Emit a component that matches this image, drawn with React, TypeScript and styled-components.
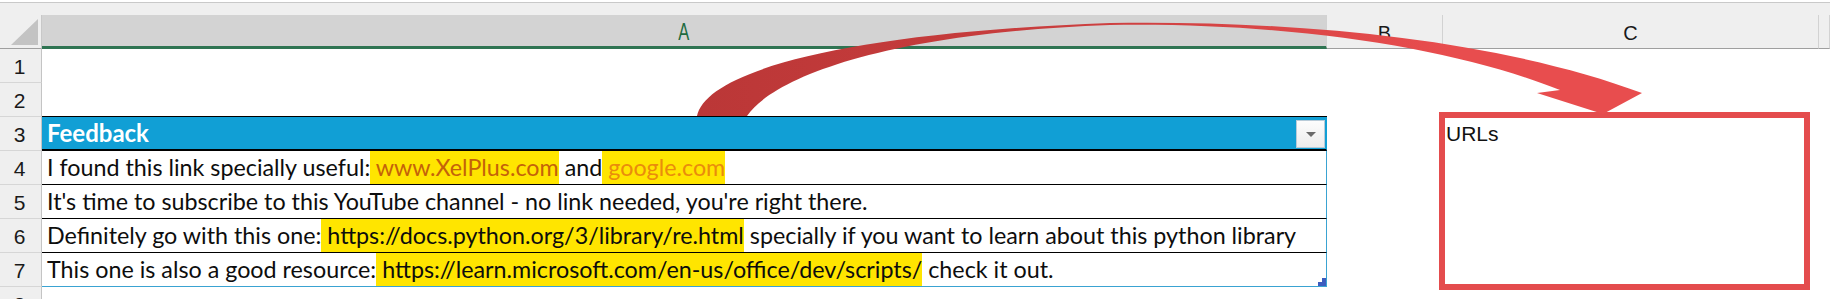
import React from "react";
import styled, { createGlobalStyle } from "styled-components";

const GlobalStyle = createGlobalStyle`
  html, body {
    margin: 0;
    padding: 0;
    background: #ffffff;
  }
  body {
    font-family: "Liberation Sans", Arial, sans-serif;
  }
`;

const COLS = "42px 1285px 116px 376px 1fr";

const Sheet = styled.div`
  position: relative;
  width: 1830px;
  height: 299px;
  overflow: hidden;
  background: #fff;
`;

const TopStrip = styled.div`
  height: 12px;
  margin-top: 2px;
  border-top: 1px solid #c9c9c9;
  background: #efefef;
`;

const HeaderRow = styled.div`
  display: grid;
  grid-template-columns: ${COLS};
  grid-template-rows: 34px;
  height: 34px;
  background: #efefef;
`;

const Corner = styled.div`
  box-sizing: border-box;
  border-right: 1px solid #c8c8c8;
  border-bottom: 1px solid #9f9f9f;
  display: flex;
  align-items: flex-end;
  justify-content: flex-end;
  padding: 0 3px 3px 0;
`;

const ColHead = styled.div<{ $active?: boolean }>`
  box-sizing: border-box;
  display: flex;
  align-items: center;
  justify-content: center;
  padding-top: 3px;
  border-right: 1px solid #d2d2d2;
  border-bottom: ${(p) => (p.$active ? "3px solid #2f7452" : "1px solid #9f9f9f")};
  background: ${(p) => (p.$active ? "#d3d3d3" : "#efefef")};
  color: ${(p) => (p.$active ? "#1e6b40" : "#1a1a1a")};
  font-size: 20px;
`;

const NarrowLetter = styled.span`
  display: inline-block;
  font-size: 23px;
  transform: scaleX(0.72);
`;

const Row = styled.div`
  display: grid;
  grid-template-columns: ${COLS};
  grid-template-rows: 34px;
  height: 34px;
`;

const RowHead = styled.div`
  box-sizing: border-box;
  background: #efefef;
  border-right: 1px solid #c4c4c4;
  border-bottom: 1px solid #d6d6d6;
  text-align: center;
  padding: 2px 2px 0 0;
  line-height: 31px;
  font-size: 21px;
  color: #1a1a1a;
  overflow: hidden;
`;

type Kind = "plain" | "above" | "head" | "body" | "last";

const borderBottom: Record<Kind, string> = {
  plain: "none",
  above: "1px solid #000",
  head: "2px solid #000",
  body: "1px solid #000",
  last: "1px solid #3aa3d2",
};

const TableCell = styled.div<{ $kind: Kind }>`
  position: relative;
  box-sizing: border-box;
  display: flex;
  align-items: ${(p) => (p.$kind === "head" ? "flex-end" : "stretch")};
  padding-left: 5px;
  border-bottom: ${(p) => borderBottom[p.$kind]};
  border-right: ${(p) =>
    p.$kind === "head"
      ? "1px solid #119fd5"
      : p.$kind === "body" || p.$kind === "last"
      ? "1px solid #3aa3d2"
      : "none"};
  background: ${(p) => (p.$kind === "head" ? "#119fd5" : "#fff")};
  font-family: Lato, "Liberation Sans", sans-serif;
  font-size: 23.3px;
  line-height: 33px;
  color: #0d0d0d;
  white-space: nowrap;
  overflow: hidden;
`;

const HeadTitle = styled.span`
  align-self: stretch;
  line-height: 32px;
  font-size: 24px;
  font-weight: 700;
  color: #ffffff;
`;

const FilterButton = styled.div`
  margin-left: auto;
  margin-right: 1px;
  margin-bottom: 1px;
  width: 29px;
  height: 28px;
  box-sizing: border-box;
  border: 1px solid #b9cbd8;
  background: linear-gradient(#fdfdfd, #ececec);
  display: flex;
  align-items: center;
  justify-content: center;
  &::after {
    content: "";
    width: 0;
    height: 0;
    border-left: 5px solid transparent;
    border-right: 5px solid transparent;
    border-top: 5px solid #6a6a6a;
  }
`;

const Text = styled.span`
  display: inline-block;
`;

const Mark = styled.span<{ $color?: string }>`
  display: inline-block;
  background: #ffe500;
  color: ${(p) => p.$color || "#0d0d0d"};
`;

const ResizeHandle = styled.svg`
  position: absolute;
  right: 0;
  bottom: 0;
`;

const Cell = styled.div`
  box-sizing: border-box;
  padding-left: 3px;
  line-height: 33px;
  font-size: 21px;
  color: #111;
  white-space: nowrap;
`;

const RedBox = styled.div`
  position: absolute;
  left: 1439px;
  top: 112px;
  width: 371px;
  height: 178px;
  box-sizing: border-box;
  border: 6px solid #e44c4d;
  pointer-events: none;
`;

const ArrowLayer = styled.svg`
  position: absolute;
  left: 0;
  top: 0;
  pointer-events: none;
`;

type Part = { text: string; mark?: boolean; color?: string };

const NB = "\u00a0";

const rows: { n: number; kind: Kind; parts?: Part[]; head?: boolean; c?: string }[] = [
  { n: 1, kind: "plain" },
  { n: 2, kind: "above" },
  { n: 3, kind: "head", head: true, c: "URLs" },
  {
    n: 4,
    kind: "body",
    parts: [
      { text: "I found this link specially useful:" },
      { text: NB + "www.XelPlus.com", mark: true, color: "#c4620a" },
      { text: NB + "and" },
      { text: NB + "google.com", mark: true, color: "#ea8c0c" },
    ],
  },
  {
    n: 5,
    kind: "body",
    parts: [
      {
        text: "It's time to subscribe to this YouTube channel - no link needed, you're right there.",
      },
    ],
  },
  {
    n: 6,
    kind: "body",
    parts: [
      { text: "Definitely go with this one:" },
      { text: NB + "https://docs.python.org/3/library/re.html", mark: true },
      { text: NB + "specially if you want to learn about this python library" },
    ],
  },
  {
    n: 7,
    kind: "last",
    parts: [
      { text: "This one is also a good resource:" },
      { text: NB + "https://learn.microsoft.com/en-us/office/dev/scripts/", mark: true },
      { text: NB + "check it out." },
    ],
  },
  { n: 8, kind: "plain" },
];

export default function App() {
  return (
    <Sheet>
      <GlobalStyle />
      <TopStrip />
      <HeaderRow>
        <Corner>
          <svg width="27" height="26" viewBox="0 0 27 26">
            <polygon points="27,0 27,26 0,26" fill="#c3c3c3" />
          </svg>
        </Corner>
        <ColHead $active>
          <NarrowLetter>A</NarrowLetter>
        </ColHead>
        <ColHead>B</ColHead>
        <ColHead>C</ColHead>
        <ColHead />
      </HeaderRow>

      {rows.map((r) => (
        <Row key={r.n}>
          <RowHead>{r.n}</RowHead>
          <TableCell $kind={r.kind}>
            {r.head && (
              <>
                <HeadTitle>Feedback</HeadTitle>
                <FilterButton />
              </>
            )}
            {r.parts &&
              r.parts.map((p, i) =>
                p.mark ? (
                  <Mark key={i} $color={p.color}>
                    {p.text}
                  </Mark>
                ) : (
                  <Text key={i}>{p.text}</Text>
                )
              )}
            {r.kind === "last" && (
              <ResizeHandle width="8" height="8" viewBox="0 0 8 8">
                <polygon points="8,0 8,8 0,8 0,4 4,4 4,0" fill="#3c5cbf" />
              </ResizeHandle>
            )}
          </TableCell>
          <Cell />
          <Cell>{r.c}</Cell>
          <Cell />
        </Row>
      ))}

      <RedBox />

      <ArrowLayer width="1830" height="299" viewBox="0 0 1830 299">
        <defs>
          <linearGradient id="arrowFill" x1="700" y1="0" x2="1450" y2="0" gradientUnits="userSpaceOnUse">
            <stop offset="0" stopColor="#bb3737" />
            <stop offset="0.45" stopColor="#c83d3d" />
            <stop offset="1" stopColor="#e84d4e" />
          </linearGradient>
        </defs>
        <path
          d="M 697 116 C 706 72, 840 33, 1110 23 C 1300 20, 1500 40, 1642 93 L 1603 114 L 1537 93 L 1560 90 C 1460 50, 1300 22, 1110 25 C 890 33, 775 76, 747 116 Z"
          fill="url(#arrowFill)"
        />
      </ArrowLayer>
    </Sheet>
  );
}
